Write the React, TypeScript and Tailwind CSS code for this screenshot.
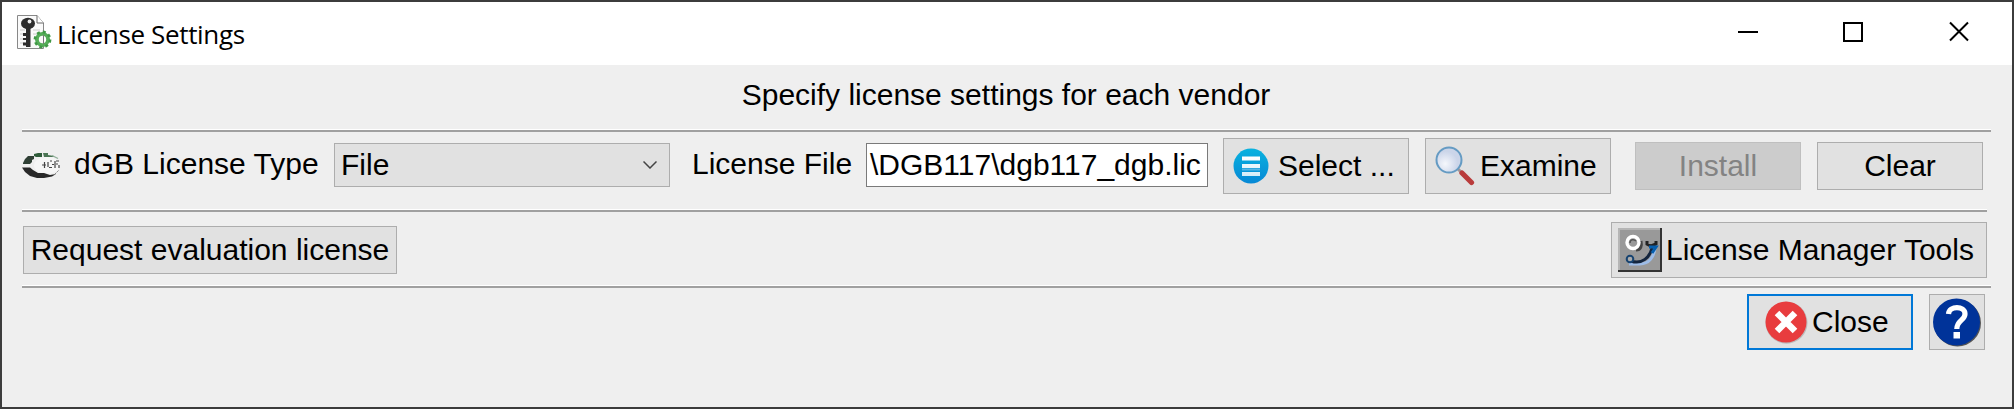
import type { ReactNode } from "react";

function Divider({ className }: { className: string }) {
  return <div className={`h-[3px] border-t border-b-2 border-t-white border-b-[#a0a0a0] ${className}`} />;
}

function PushButton({ className, children }: { className: string; children: ReactNode }) {
  return (
    <button type="button" className={`flex shrink-0 items-center whitespace-nowrap ${className}`}>
      {children}
    </button>
  );
}

function LicenseIcon() {
  return (
    <svg width="36" height="36" viewBox="0 0 36 36" className="shrink-0">
      <path d="M.5 .5H20L26.500 8V33.500H.500Z" fill="#fafafa" stroke="#888" />
      <path d="M20 .5V8H26.500" fill="#fff" stroke="#666" />
      <path d="M3 15h5M3 19h5M3 24h5M3 28h5M16 15h7M16 19h4" stroke="#ccc" />
      <ellipse cx="11" cy="8.500" rx="7" ry="5.800" fill="#2d2d2d" />
      <circle cx="12.500" cy="6.500" r="1.900" fill="#eee" />
      <path d="M9 13h4.500v19H9zM6 18h3v3H6zM6 23h3v2H6zM6 27.500h3v3H6z" fill="#2d2d2d" />
      <circle cx="25.500" cy="24.500" r="5.600" fill="none" stroke="#55ad58" strokeWidth="3.800" />
      <circle cx="25.500" cy="24.500" r="7.600" fill="none" stroke="#3f9845" strokeWidth="2.600" strokeDasharray="3 2.970" />
      <path d="M26.500 20v9" stroke="#777" />
    </svg>
  );
}

function VendorLogo() {
  return (
    <svg width="40" height="28" viewBox="0 0 40 28" className="shrink-0">
      <ellipse cx="25" cy="13.500" rx="13" ry="8.500" fill="#f6f6f6" />
      <path d="M1 11L3 7L6 4H12V7L10 8V10L8 12H1Z" fill="#2f3f34" />
      <path d="M12 4V2L16 1H20V5H14Z" fill="#2f5c3a" />
      <path d="M21 1H26V3L32 4V5H22Z" fill="#4b7554" />
      <path d="M30 3.500L36 6.500" stroke="#92b09a" strokeWidth="1.300" />
      <path d="M0 15.500H8L11 18L16 21H22L28 23L34 22L30 24.500L22 26H15L8 24L3 20Z" fill="#292929" />
      <path d="M33 22L37 18" stroke="#888" strokeDasharray="2 1" />
      <path d="M20 13h4M22.500 10v6M26 10v5M28 9h2M27 15.500h3M30 12.500h2M33 9v7M34 9h3M34 12h2M37 13v3" stroke="#444" strokeWidth="1.200" />
    </svg>
  );
}

function ListIcon() {
  return (
    <svg width="36" height="38" viewBox="0 0 36 38" className="shrink-0">
      <defs>
        <linearGradient id="blue" x2="0" y2="1">
          <stop stopColor="#09b2df" />
          <stop offset="1" stopColor="#0788d5" />
        </linearGradient>
        <linearGradient id="bar" x2="0" y2="1">
          <stop stopColor="#fff" />
          <stop offset="1" stopColor="#d4ecf8" />
        </linearGradient>
      </defs>
      <circle cx="18" cy="19" r="17.500" fill="url(#blue)" />
      <path d="M9 9.500h18v4H9zM9 17h18v4H9zM9 25h18v4H9z" fill="url(#bar)" />
      <path d="M9 21.500h18v2H9z" fill="#57b5e4" />
    </svg>
  );
}

function MagnifierIcon() {
  return (
    <svg width="40" height="40" viewBox="0 0 40 40" className="shrink-0">
      <defs>
        <radialGradient id="glass" cx=".35" cy=".65">
          <stop stopColor="#f5f7fc" />
          <stop offset="1" stopColor="#cbd5e9" />
        </radialGradient>
      </defs>
      <path d="M23 23L28 28" stroke="#a09596" strokeWidth="3" />
      <path d="M27 27L36.500 36.500" stroke="#b93b3b" strokeWidth="5.200" strokeLinecap="round" />
      <circle cx="14" cy="14" r="12.500" fill="url(#glass)" stroke="#659bc3" strokeWidth="2" />
    </svg>
  );
}

function ToolsIcon() {
  return (
    <svg width="44" height="44" viewBox="0 0 44 44" className="shrink-0">
      <path d="M0 0H44V44H0Z" fill="#999" />
      <path d="M0 1H43M1 0V43" stroke="#b5b5b5" strokeWidth="2" />
      <path d="M0 43H44M43 0V44" stroke="#333" strokeWidth="2" />
      <path d="M18 22C23 22 24 18 23 13" fill="none" stroke="#444" strokeWidth="3" />
      <circle cx="15" cy="14.500" r="6" fill="#999" stroke="#fff" strokeWidth="3.400" />
      <path d="M12 15C12 11 16 11 18 13" fill="none" stroke="#555" strokeWidth="1.500" />
      <path d="M11 36H22C31 36 36 29 37 20" fill="none" stroke="#9dbce7" strokeWidth="3" />
      <path d="M13 33C24 37 32 29 34 20" fill="none" stroke="#14253d" strokeWidth="3" />
      <circle cx="12" cy="31" r="3.300" fill="#aaa" stroke="#174370" strokeWidth="2" />
      <path d="M29 13V16L33 18L38 16V13" fill="none" stroke="#222" strokeWidth="3" />
      <path d="M31 19H38L34 25" fill="none" stroke="#075fae" strokeWidth="3" />
    </svg>
  );
}

function CloseIcon() {
  return (
    <svg width="44" height="44" viewBox="0 0 44 44" className="shrink-0">
      <circle cx="22.500" cy="22.700" r="21" fill="#bbb" />
      <circle cx="22" cy="22" r="20.500" fill="#e83c3e" />
      <path d="M13 13L31 31M31 13L13 31" stroke="#fff" strokeWidth="6.500" />
    </svg>
  );
}

function HelpIcon() {
  return (
    <svg width="50" height="50" viewBox="0 0 50 50" className="shrink-0">
      <circle cx="25.500" cy="26" r="23.500" fill="#555" />
      <circle cx="24.500" cy="25" r="23.500" fill="#003399" />
      <path d="M16.500 17C17 8.500 33 8.500 33 17C33 23.500 24.800 23 24.800 32" fill="none" stroke="#fff" strokeWidth="5.200" />
      <path d="M21.500 35h6.500v6.500h-6.500z" fill="#fff" />
    </svg>
  );
}

export default function App() {
  return (
    <main className="flex h-[409px] w-[2014px] flex-col overflow-hidden border-2 border-[#3c3c3c] bg-[#efefef] font-['Liberation_Sans',sans-serif] text-[30px] leading-[34px] text-black">
      <header className="flex h-[63px] shrink-0 items-start bg-white">
        <div className="flex pl-[15px] pt-[13px]">
          <LicenseIcon />
          <h1 className="ml-1 whitespace-nowrap font-['Open_Sans',sans-serif] text-[26px] leading-[38px] tracking-[-0.35px]">License Settings</h1>
        </div>
        <div className="ml-auto flex pr-[42px] pt-[19px]">
          <svg width="232" height="22" viewBox="0 0 232 22" fill="none" stroke="#000" strokeWidth="2">
            <path d="M0 11H20M106 2H124V20H106Z" />
            <path d="M212 1.500L230 19.500M230 1.500L212 19.500" />
          </svg>
        </div>
      </header>

      <div className="flex h-[64px] shrink-0 justify-center pr-[2px] pt-[13px]">Specify license settings for each vendor</div>
      <Divider className="ml-5 w-[1969px]" />

      <section className="flex h-[77px] shrink-0 items-start pl-5 pt-[6px]">
        <div className="pt-[14px]"><VendorLogo /></div>
        <span className="ml-3 w-[260px] shrink-0 whitespace-nowrap pt-[9px]">dGB License Type</span>
        <div className="mt-[5px] flex h-11 w-[336px] shrink-0 items-center justify-between border border-[#adadad] bg-[#e1e1e1] pl-[6px] pr-3">
          <span>File</span>
          <svg width="14" height="8" viewBox="0 0 14 8" fill="none" stroke="#444" strokeWidth="1.500"><path d="M.5 .5L7 7L13.500 .5" /></svg>
        </div>
        <span className="ml-[22px] w-[174px] shrink-0 whitespace-nowrap pt-[9px]">License File</span>
        <div className="mt-[5px] flex h-11 w-[342px] shrink-0 items-center whitespace-nowrap border border-[#7a7a7a] bg-white pl-[3px]">\DGB117\dgb117_dgb.lic</div>
        <PushButton className="ml-[15px] h-14 w-[186px] border border-[#adadad] bg-[#e1e1e1] pl-[9px]"><ListIcon /><span className="ml-[9px]">Select ...</span></PushButton>
        <PushButton className="ml-4 h-14 w-[186px] border border-[#adadad] bg-[#e1e1e1] pl-[9px]"><MagnifierIcon /><span className="ml-[5px]">Examine</span></PushButton>
        <PushButton className="ml-6 mt-1 h-12 w-[166px] justify-center border border-[#bfbfbf] bg-[#ccc] text-[#838383]">Install</PushButton>
        <PushButton className="ml-4 mt-1 h-12 w-[166px] justify-center border border-[#adadad] bg-[#e1e1e1]">Clear</PushButton>
      </section>

      <Divider className="ml-5 w-[1965px]" />
      <section className="flex h-[73px] shrink-0 items-start justify-between pl-[21px] pr-[25px] pt-[10px]">
        <PushButton className="mt-1 h-12 w-[374px] justify-center border border-[#adadad] bg-[#e1e1e1]">Request evaluation license</PushButton>
        <PushButton className="h-14 w-[376px] border border-[#adadad] bg-[#e1e1e1] pl-[6px]"><ToolsIcon /><span className="ml-1">License Manager Tools</span></PushButton>
      </section>
      <Divider className="ml-5 w-[1969px]" />

      <footer className="flex justify-end gap-4 pr-[27px] pt-[6px]">
        <PushButton className="h-14 w-[166px] border-2 border-[#0078d7] bg-[#e1e1e1] pl-[15px]"><CloseIcon /><span className="ml-1">Close</span></PushButton>
        <PushButton className="h-14 w-14 justify-center border border-[#adadad] bg-[#e1e1e1]"><HelpIcon /></PushButton>
      </footer>
    </main>
  );
}
